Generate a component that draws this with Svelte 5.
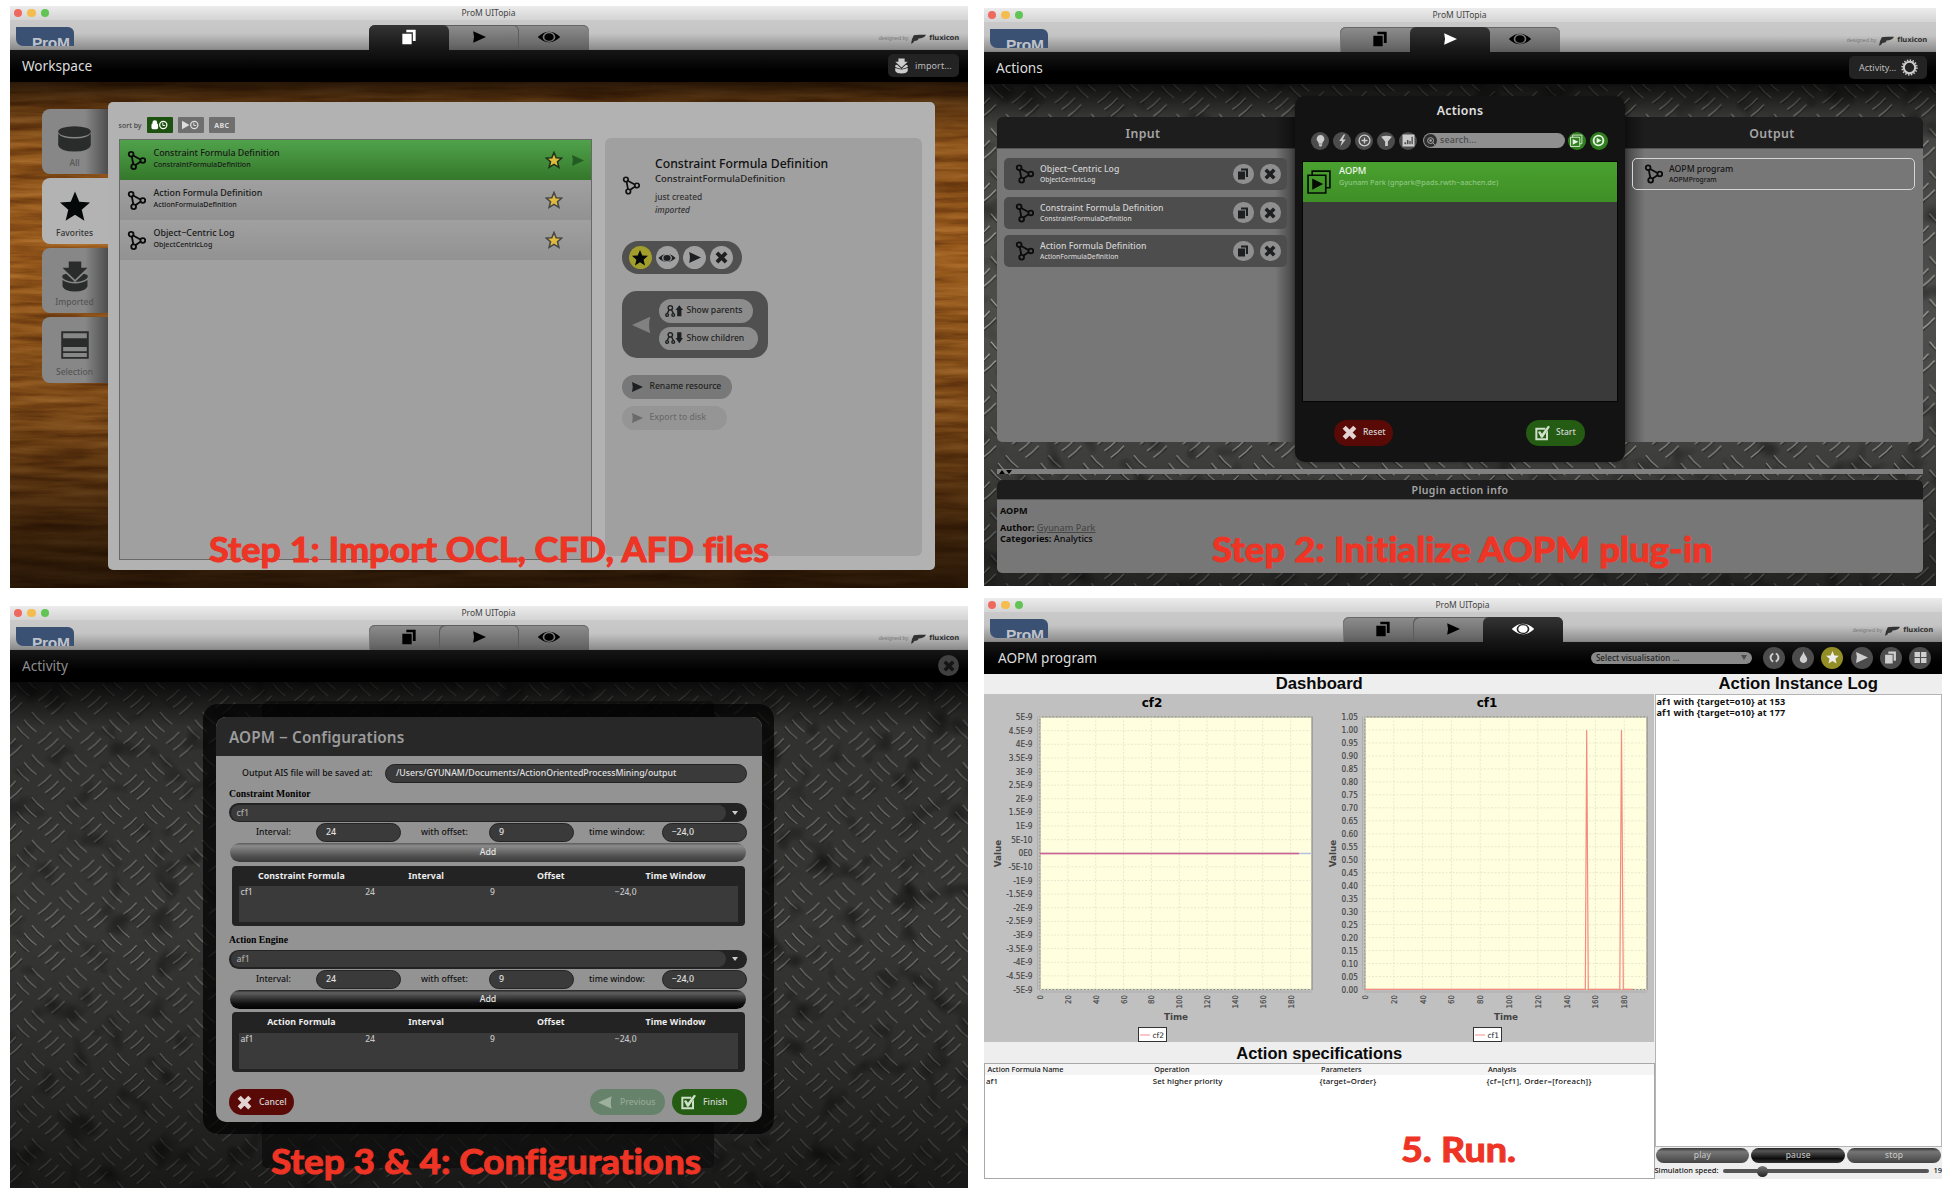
<script>
  const resources = [
    { name: 'Constraint Formula Definition', type: 'ConstraintFormulaDefinition' },
    { name: 'Action Formula Definition', type: 'ActionFormulaDefinition' },
    { name: 'Object−Centric Log', type: 'ObjectCentricLog' }
  ];
  const inputs = [resources[2], resources[0], resources[1]];
  const sideTabs = ['All', 'Favorites', 'Imported', 'Selection'];
  const sections = [
    { title: 'Constraint Monitor', key: 'cf1', column: 'Constraint Formula' },
    { title: 'Action Engine', key: 'af1', column: 'Action Formula' }
  ];
  const filters = ['bulb', 'bolt', 'plus', 'funnel', 'bars'];
  const viewTools = ['refresh', 'drop', 'star', 'play', 'copy', 'tiles'];
  const specColumns = ['Action Formula Name', 'Operation', 'Parameters', 'Analysis'];
  const specRow = ['af1', 'Set higher priority', '{target=Order}', '{cf=[cf1], Order=[foreach]}'];
  const logLines = ['af1 with {target=o10} at 153', 'af1 with {target=o10} at 177'];

  const top = 23;
  const height = 272.5;
  const expLabels = ['5E-9', '4.5E-9', '4E-9', '3.5E-9', '3E-9', '2.5E-9', '2E-9', '1.5E-9', '1E-9', '5E-10', '0E0',
    '-5E-10', '-1E-9', '-1.5E-9', '-2E-9', '-2.5E-9', '-3E-9', '-3.5E-9', '-4E-9', '-4.5E-9', '-5E-9'];
  const decLabels = Array.from({ length: 22 }, (_, i) => (1.05 - i * 0.05).toFixed(2));
  const charts = [
    { name: 'cf2', x: 56, w: 272, step: 27.85, labels: expLabels, labelX: 48.5, titleX: 168, timeX: 192, valueX: 17, legendX: 154 },
    { name: 'cf1', x: 381, w: 282, step: 28.8, labels: decLabels, labelX: 374, titleX: 503, timeX: 522, valueX: 352, legendX: 489 }
  ];
  const ticks = [0, 20, 40, 60, 80, 100, 120, 140, 160, 180];

  // Tread-plate cell: three back slashes and three forward slashes, repeated at the wrapped offsets.
  const cell = 42.67;
  const wraps = [-cell, 0, cell];
  const backs = [[12.7, 8], [20, 1.3], [27.7, -6.4]];
  const slashes = [[35, 13], [42, 19.6], [48.3, 26.3]];
</script>

{#snippet icon(name)}
  <svg class="icon" viewBox="0 0 24 24" fill="currentColor">
    {#if name === 'node'}
      <g fill="none" stroke="currentColor" stroke-width="2.3">
        <path d="M6 6.5 8 17M8.3 6 17 10.8M17 13.6 10.5 18" />
        <circle cx="5.2" cy="4" r="3" /><circle cx="20" cy="12" r="3" /><circle cx="8.4" cy="20" r="3" />
      </g>
    {:else if name === 'eye'}
      <path fill-rule="evenodd" d="M0 12Q12-2 24 12Q12 26 0 12ZM12 5.2a6.8 6.8 0 1 0 0 13.6a6.8 6.8 0 1 0 0-13.6Z" />
      <circle cx="12" cy="12" r="5" />
    {:else if name === 'copy'}
      <path d="M2 7h14v16H2zM8 1h14v17h-4.2V5H8z" />
    {:else if name === 'play'}
      <path d="M2 2Q5 12 2 22L24 12Z" />
    {:else if name === 'back'}
      <path d="M22 2Q19 12 22 22L0 12Z" />
    {:else if name === 'x'}
      <path d="M6 1l6 6 6-6 5 5-6 6 6 6-5 5-6-6-6 6-5-5 6-6-6-6z" />
    {:else if name === 'star'}
      <path d="M12 0l3.4 8.2 8.6.6-6.6 5.7 2.1 8.8-7.5-4.8-7.5 4.8 2.1-8.8L0 8.800l8.600-.6z" />
    {:else if name === 'fav'}
      <path d="M12 2l2.900 7 7.500.5-5.800 4.900 1.900 7.400-6.500-4.100-6.500 4.100 1.900-7.400L1.600 9.500l7.500-.5z" fill="#e0bb3c" stroke="currentColor" stroke-width="2" />
    {:else if name === 'disk'}
      <ellipse cx="12" cy="6.800" rx="11.500" ry="3.800" />
      <path d="M.5 8.300Q3 11.600 12 11.600T23.500 8.300V16.500Q22 20.800 12 20.800T.5 16.500Z" />
    {:else if name === 'import'}
      <path d="M7 0h10v5h5l-10 9.500L2 5h5z" />
      <path d="M2.500 10.500L5 9.800l7 6.500 7-6.500 2.500.9Q23 12 21.500 13.500Q18 16.200 12 16.200T2.500 13.500Q1 12 2.500 10.500Z" />
      <path d="M2 14.800Q6 17.500 12 17.500T22 14.800V20Q20 24 12 24T2 20Z" />
    {:else if name === 'rows'}
      <path fill-rule="evenodd" d="M1 1h22v22H1zM2.500 2.500v4h19v-4zM2.500 13.500v3.500h19v-3.500zM2.500 18.300v3.200h19v-3.200z" />
    {:else if name === 'check'}
      <path d="M2 4h15v3H5v13h13v-8l3-4v15H2z" />
      <path d="M6 10.500l3-1.500 3 4L21 1l3 1.500L13 19h-2.500z" />
    {:else if name === 'gear'}
      <circle cx="12" cy="12" r="8" fill="none" stroke="currentColor" stroke-width="2.900" />
      <circle cx="12" cy="12" r="10.300" fill="none" stroke="currentColor" stroke-width="2.600" stroke-dasharray="2 2.045" />
    {:else if name === 'bulb'}
      <path d="M12 2a7 7 0 0 1 5 12Q15.500 16 15.500 18h-7Q8.500 16 7 14A7 7 0 0 1 12 2ZM9 19h6v2l-2 2h-2l-2-2z" />
    {:else if name === 'bolt'}
      <path d="M14 1L6 13h5L8 23 18 10h-5.500L17 1z" />
    {:else if name === 'plus'}
      <g fill="none" stroke="currentColor" stroke-width="2.400"><circle cx="12" cy="12" r="10" /><path d="M12 6.500v11M6.500 12h11" /></g>
    {:else if name === 'funnel'}
      <path d="M2 5q10-4 20 0l-7.500 9v8h-5v-8z" />
    {:else if name === 'bars'}
      <path fill-rule="evenodd" d="M1 1h22v22H1zM4.500 15v4h3v-4zM9 11v8h3v-8zM13.500 13v6h2.500v-6zM17.500 5v14h2.500V5z" />
    {:else if name === 'search'}
      <g fill="none" stroke="currentColor" stroke-width="2.400"><circle cx="11" cy="11" r="7" /><path d="M16 16l5 5" /></g><circle cx="11" cy="11" r="3" />
    {:else if name === 'refresh'}
      <path d="M9 3Q2 7 3 13q.5 5 5 8l2.500-2.500Q6 16 6.500 12T10.500 6zM15 21q7-4 6-10q-.5-5-5-8l-2.500 2.500Q18 8 17.500 12T13.500 18z" />
    {:else if name === 'drop'}
      <path d="M12 1q1.500 5 5 9.500 4 6-.5 10-4.500 3.500-9 0-4.500-4-.5-10Q11 6 12 1z" />
    {:else if name === 'tiles'}
      <path d="M1 2h10v9H1zM13 2h10v9H13zM1 13h10v9H1zM13 13h10v9H13z" />
    {:else if name === 'plugin'}
      <path fill="none" stroke="currentColor" stroke-width="1.600" d="M1 6h17v17H1zM5 6V2h17v16h-4" /><path d="M5 9l10.500 5.500L5 20z" />
    {:else if name === 'target'}
      <circle cx="12" cy="12" r="9" fill="none" stroke="currentColor" stroke-width="3.500" /><path d="M8.500 7l9 5-9 5z" />
    {/if}
  </svg>
{/snippet}

{#snippet family(down)}
  <svg class="family" viewBox="0 0 34 24">
    <g fill="none" stroke="#1d1f20" stroke-width="2.600">
      <circle cx="10" cy="6" r="4.200" /><path d="M7.500 10L4 17M12.500 10L16 17" /><circle cx="4" cy="19.500" r="2.600" /><circle cx="15.500" cy="19.500" r="2.600" />
    </g>
    {#if down}<path fill="#1d1f20" d="M23 1h8v11h3l-7 10-7-10h3z" />{:else}<path fill="#1d1f20" d="M27 1l7 9h-3v12h-8V10h-3z" />{/if}
  </svg>
{/snippet}

{#snippet plate(id, tone)}
  <svg class="backdrop {tone}">
    <defs>
      <pattern {id} width={cell} height={cell} patternUnits="userSpaceOnUse">
        {#each wraps as dx}
          {#each wraps as dy}
            {#each backs as [x, y]}
              <path class="shade" d="M{x + dx - 6.5} {y + dy - 4.5}q5 6 11.500 10.500" />
              <path class="ridge" d="M{x + dx - 5.5} {y + dy - 6}q4.500 6.500 11.500 11.500" />
            {/each}
            {#each slashes as [x, y]}
              <path class="shade" d="M{x + dx - 5.5} {y + dy + 7}l12-11" />
              <path class="ridge" d="M{x + dx - 6.5} {y + dy + 5.5}q7-4.500 12.500-11" />
            {/each}
          {/each}
        {/each}
      </pattern>
      <filter id="{id}-grime" x="0" y="0" width="100%" height="100%">
        <feTurbulence type="fractalNoise" baseFrequency="0.035" numOctaves="2" seed="8" />
        <feColorMatrix values="0 0 0 0 0  0 0 0 0 0  0 0 0 0 0  1.400 0 0 0 -0.780" />
      </filter>
    </defs>
    <rect class="base" width="100%" height="100%" />
    <rect width="100%" height="100%" fill="url(#{id})" />
    <rect width="100%" height="100%" filter="url(#{id}-grime)" />
  </svg>
  <div class="backdrop fade"></div>
{/snippet}

{#snippet chrome(active)}
  <div class="titlebar">
    <div class="lights"><i class="red"></i><i class="amber"></i><i class="green"></i></div>
    <span>ProM UITopia</span>
  </div>
  <div class="toolbar">
    <div class="logo"><b>ProM</b></div>
    <div class="tabs">
      {#each ['copy', 'play', 'eye'] as name, i}
        <div class="tab {name}" class:active={active === i}>{@render icon(name)}</div>
      {/each}
    </div>
    <div class="brand">
      <small>designed by</small>
      <svg viewBox="0 0 16 10"><path fill="#333" d="M3 1Q5 0 16 .5 14 4.500 8 4.500 8 7 3.500 7 3 9 0 10 1 4 3 1Z" /></svg>
      <b>fluxicon</b>
    </div>
  </div>
{/snippet}

{#snippet caption(text, x, y, width)}
  <svg class="caption"><text {x} {y} textLength={width} lengthAdjust="spacingAndGlyphs">{text}</text></svg>
{/snippet}

<main>
  <div class="column left">
    <section class="window tall">
      {@render chrome(0)}
      <header class="head">
        <h1>Workspace</h1>
        <button class="headbtn import">{@render icon('import')}import...</button>
      </header>
      <div class="body workspace">
        <svg class="backdrop">
          <filter id="wood" x="0" y="0" width="100%" height="100%" color-interpolation-filters="sRGB">
            <feTurbulence type="fractalNoise" baseFrequency="0.011 0.120" numOctaves="5" seed="11" />
            <feColorMatrix values="1 0 0 0 0  1 0 0 0 0  1 0 0 0 0  0 0 0 0 1" />
            <feComponentTransfer>
              <feFuncR type="table" tableValues="0.330 0.460 0.590 0.680 0.750" />
              <feFuncG type="table" tableValues="0.170 0.250 0.350 0.430 0.500" />
              <feFuncB type="table" tableValues="0.040 0.070 0.110 0.170 0.240" />
            </feComponentTransfer>
          </filter>
          <rect width="100%" height="100%" filter="url(#wood)" />
        </svg>
        <div class="backdrop woodfade"></div>
        <nav class="sidetabs">
          {#each sideTabs as label, i}
            <div class="sidetab" class:current={i === 1}>
              {@render icon(['disk', 'star', 'import', 'rows'][i])}
              <span>{label}</span>
            </div>
          {/each}
        </nav>
        <div class="sheet">
          <div class="listpane">
            <div class="sort">
              <span>sort by</span>
              <div class="chip on">
                <svg viewBox="0 0 18 10" fill="#fff"><circle cx="4" cy="2.500" r="2.500" /><rect x=".5" y="3.500" width="7" height="6" rx="1.500" /><circle cx="13" cy="5" r="3.800" fill="none" stroke="#fff" stroke-width="1.300" /><path d="M12.500 2.500v3h2.500" fill="none" stroke="#fff" /></svg>
              </div>
              <div class="chip">
                <svg viewBox="0 0 18 10" fill="#ddd"><path d="M0 .5 8 5 0 9.500z" /><circle cx="13" cy="5" r="3.800" fill="none" stroke="#ddd" stroke-width="1.300" /><path d="M12.500 2.500v3h2.500" fill="none" stroke="#ddd" /></svg>
              </div>
              <div class="chip">ABC</div>
            </div>
            <div class="reslist">
              {#each resources as r, i}
                <div class="resrow" class:selected={i === 0}>
                  {@render icon('node')}
                  <div class="names"><p>{r.name}</p><small>{r.type}</small></div>
                  <div class="favs">{@render icon('fav')}</div>
                  <div class="go">{#if i === 0}{@render icon('play')}{/if}</div>
                </div>
              {/each}
            </div>
          </div>
          <div class="detail">
            <div class="about">
              {@render icon('node')}
              <div>
                <h2>{resources[0].name}</h2>
                <h3>{resources[0].type}</h3>
                <p>just created</p>
                <p><em>imported</em></p>
              </div>
            </div>
            <div class="pillbar">
              {#each ['star', 'eye', 'play', 'x'] as name}
                <div class="round {name}">{@render icon(name)}</div>
              {/each}
            </div>
            <div class="kin">
              {@render icon('back')}
              <div>
                <button class="soft">{@render family(false)}Show parents</button>
                <button class="soft wide">{@render family(true)}Show children</button>
              </div>
            </div>
            <button class="act">{@render icon('play')}Rename resource</button>
            <button class="act off">{@render icon('play')}Export to disk</button>
          </div>
        </div>
      </div>
      {@render caption('Step 1: Import OCL, CFD, AFD files', 199, 556, 560)}
    </section>

    <section class="window tall">
      {@render chrome(-1)}
      <header class="head dim">
        <h1>Activity</h1>
        <div class="closer">{@render icon('x')}</div>
      </header>
      <div class="body activity">
        {@render plate('plate-dark', 'dark')}
        <div class="ghost"></div>
        <div class="frame">
          <div class="dialog">
            <h2>AOPM − Configurations</h2>
            <div class="form">
              <div class="path"><span>Output AIS file will be saved at:</span><div class="field">/Users/GYUNAM/Documents/ActionOrientedProcessMining/output</div></div>
              {#each sections as s, i}
                <h4>{s.title}</h4>
                <div class="select"><div>{s.key}</div><i></i></div>
                <div class="params">
                  <span class="p1">Interval:</span><div class="field">24</div>
                  <span class="p2">with offset:</span><div class="field">9</div>
                  <span class="p3">time window:</span><div class="field">−24,0</div>
                </div>
                <button class="add" class:black={i === 1}>Add</button>
                <div class="grid">
                  <div class="gridhead">
                    {#each [s.column, 'Interval', 'Offset', 'Time Window'] as c}<b>{c}</b>{/each}
                  </div>
                  <div class="gridbody">
                    {#each [s.key, '24', '9', '−24,0'] as c}<span>{c}</span>{/each}
                  </div>
                </div>
              {/each}
              <div class="dialogfoot">
                <button class="pill redpill">{@render icon('x')}Cancel</button>
                <button class="pill pale">{@render icon('back')}Previous</button>
                <button class="pill greenpill">{@render icon('check')}Finish</button>
              </div>
            </div>
          </div>
        </div>
      </div>
      {@render caption('Step 3 & 4: Configurations', 261, 568, 430)}
    </section>
  </div>

  <div class="column right">
    <section class="window second">
      {@render chrome(1)}
      <header class="head">
        <h1>Actions</h1>
        <button class="headbtn activitybtn">Activity...{@render icon('gear')}</button>
      </header>
      <div class="body actions">
        {@render plate('plate-mid', 'mid')}
        <div class="panels">
          <div class="panel input">
            <h2>Input</h2>
            <div class="cards">
              {#each inputs as r}
                <div class="card">
                  {@render icon('node')}
                  <div class="names"><p>{r.name}</p><small>{r.type}</small></div>
                  <div class="round copy">{@render icon('copy')}</div>
                  <div class="round">{@render icon('x')}</div>
                </div>
              {/each}
            </div>
          </div>
          <div class="center">
            <h2>Actions</h2>
            <div class="filters">
              {#each filters as f}<div class="round">{@render icon(f)}</div>{/each}
              <div class="search"><div>{@render icon('search')}</div>search...</div>
              <div class="round lit">{@render icon('plugin')}</div>
              <div class="round lit">{@render icon('target')}</div>
            </div>
            <div class="plugins">
              <div class="plugin">
                {@render icon('plugin')}
                <div><p>AOPM</p><small>Gyunam Park (gnpark@pads.rwth−aachen.de)</small></div>
              </div>
            </div>
            <div class="centerfoot">
              <button class="pill redpill">{@render icon('x')}Reset</button>
              <button class="pill greenpill">{@render icon('check')}Start</button>
            </div>
          </div>
          <div class="panel output">
            <h2>Output</h2>
            <div class="cards">
              <div class="card outlined">
                {@render icon('node')}
                <div class="names"><p>AOPM program</p><small>AOPMProgram</small></div>
              </div>
            </div>
          </div>
        </div>
        <div class="splitter"><i class="up"></i><i class="down"></i></div>
        <div class="panel info">
          <h2>Plugin action info</h2>
          <div class="infotext">
            <p class="first"><b>AOPM</b></p>
            <p><b>Author:</b> <u>Gyunam Park</u></p>
            <p><b>Categories:</b> Analytics</p>
          </div>
        </div>
      </div>
      {@render caption('Step 2: Initialize AOPM plug-in', 228, 554, 501)}
    </section>

    <section class="window fourth">
      {@render chrome(2)}
      <header class="head">
        <h1>AOPM program</h1>
        <div class="viewtools">
          <div class="viewselect"><span>Select visualisation ...</span><i></i></div>
          {#each viewTools as t}<div class="round {t}">{@render icon(t)}</div>{/each}
        </div>
      </header>
      <div class="body run">
        <div class="runleft">
          <h2>Dashboard</h2>
          <svg class="charts" viewBox="0 0 670 348">
            {#each charts as c}
              <text class="ctitle" x={c.titleX} y="13">{c.name}</text>
              <rect x={c.x} y={top} width={c.w} height={height} fill="#ffffdf" stroke="#8c8c84" stroke-width="1.200" />
              <path class="axis" d="M{c.x - 2.500} {top}v{height}M{c.x} {top + height + 2.500}h{c.w}" />
              {#each c.labels as l, i}
                {@const y = top + (i * height) / (c.labels.length - 1)}
                <path class="gridline" d="M{c.x} {y}h{c.w}" />
                <text class="ylabel" x={c.labelX} y={y + 3}>{l}</text>
              {/each}
              {#each ticks as t, i}
                {@const x = c.x + i * c.step}
                <path class="gridline" d="M{x} {top}v{height}" />
                <text class="xlabel" transform="translate({x + 3} {top + height + 5.500}) rotate(-90)">{t}</text>
              {/each}
              <text class="clabel" x={c.timeX} y="325.500">Time</text>
              <text class="clabel" transform="translate({c.valueX} 159.500) rotate(-90)">Value</text>
              <rect x={c.legendX + 0.500} y="333.500" width="28" height="14" fill="#fff" stroke="#333" />
              <path d="M{c.legendX + 2} 341h10" stroke="#f58d8d" />
              <text class="legend" x={c.legendX + 14.500} y="343.500">{c.name}</text>
            {/each}
            <path d="M56 159.500h272" stroke="#b9bfe0" stroke-width="1.300" />
            <path d="M56 159.500h259" stroke="#d0608c" stroke-width="1.300" />
            <path d="M381 295.300h220.300L602.700 36 604.300 295.300h31.500L637.500 36 639.300 295.300h9.700" fill="none" stroke="#f58a80" stroke-width="1.200" />
          </svg>
          <h2 class="lower">Action specifications</h2>
          <div class="specs">
            <div class="spechead">{#each specColumns as c}<span>{c}</span>{/each}</div>
            <div class="specrow">{#each specRow as c}<span>{c}</span>{/each}</div>
          </div>
        </div>
        <div class="runright">
          <h2>Action Instance Log</h2>
          <div class="log">{#each logLines as l}<p>{l}</p>{/each}</div>
          <div class="media"><button>play</button><button class="black">pause</button><button>stop</button></div>
          <div class="speed"><span>Simulation speed:</span><div class="track"><i></i></div><span>19</span></div>
        </div>
      </div>
      {@render caption('5. Run.', 417, 564, 115)}
    </section>
  </div>
</main>

<style>
  :global(body) { background: #fff; }
  main { display: flex; width: 1948px; height: 1196px; overflow: hidden; font-family: 'Noto Sans', 'Open Sans', sans-serif; font-weight: 500; line-height: 1; color: #111; }
  main :global(*) { box-sizing: border-box; }
  h1, h2, h3, h4, p { margin: 0; font-weight: inherit; }
  button { border: 0; font: inherit; color: inherit; padding: 0; display: flex; align-items: center; }
  .icon { display: block; flex: none; width: 18px; height: 18px; }
  .column { display: flex; flex-direction: column; }
  .left { padding: 6px 0 0 10px; gap: 18px; }
  .right { padding: 8px 0 0 16px; gap: 12.500px; }
  .window { position: relative; display: flex; flex-direction: column; overflow: hidden; }
  .tall { width: 958px; height: 582px; }
  .second { width: 952px; height: 577.500px; }
  .fourth { width: 958px; height: 581px; }

  .titlebar { position: relative; display: flex; align-items: center; justify-content: center; height: 14px; flex: none; background: linear-gradient(#ececec, #d4d4d4); font-size: 8.500px; font-weight: 400; color: #444; padding-right: 1px; }
  .lights { position: absolute; left: 3.500px; top: 2.500px; display: flex; gap: 5px; }
  .lights i { width: 8.500px; height: 8.500px; border-radius: 50%; }
  .red { background: #ee6a5f; } .amber { background: #f5bd4f; } .green { background: #61c454; }
  .toolbar { display: grid; grid-template-columns: calc(50% - 120px) 220px 1fr; height: 30px; flex: none; background: linear-gradient(#cacaca, #c4c4c4 45%, #8b8b8b 98%, #666); }
  .logo { margin: 7px 0 0 6px; width: 58px; height: 19px; overflow: hidden; background: #3b5174; border-radius: 0 6px 0 7px; padding: 7.500px 0 0 16px; font-family: 'Liberation Sans', sans-serif; font-size: 15.500px; color: #bfc3c9; line-height: 16px; }
  .logo b { font-weight: 700; letter-spacing: -.3px; }
  .tabs { display: flex; margin-top: 4.500px; border-radius: 6px 6px 0 0; background: linear-gradient(#8e8e8e, #6b6b6b 75%, #5c5c5c); box-shadow: inset 0 1px #666, inset 1px 0 #777; }
  .tab { width: 80px; margin-right: -10px; display: flex; align-items: center; justify-content: center; color: #000; border-radius: 6px 6px 0 0; }
  .tab:last-child { margin-right: 0; }
  .tab:nth-child(2):not(.active) { box-shadow: inset 1px 1px #5d5d5d, inset -1px 0 #5d5d5d; }
  .tab.active { color: #fff; background: linear-gradient(#343434, #151515); position: relative; z-index: 1; }
  .tab .icon { width: 16px; height: 16px; }
  .tab.eye .icon { width: 18px; height: 18px; transform: scaleX(1.250); }
  .tab.play .icon { width: 14px; height: 14px; }
  .brand { display: flex; align-items: center; justify-content: flex-end; padding: 7px 9px 0 0; gap: 3px; font-size: 8px; color: #333; }
  .brand small { font-family: 'Liberation Sans', sans-serif; font-size: 5.500px; color: #777; }
  .brand svg { width: 15px; height: 10px; }
  .brand b { font-family: 'DejaVu Sans', sans-serif; font-size: 7px; letter-spacing: -.2px; }
  .head { display: flex; align-items: center; justify-content: space-between; height: 31.500px; flex: none; background: linear-gradient(#161616, #000 65%); color: #ddd; padding: 0 9px 0 12px; }
  .head h1 { font-size: 13.600px; font-weight: 400; margin-top: 1px; }
  .head.dim { color: #8d8d8d; }
  .headbtn { height: 23px; border-radius: 5px; background: #232323; color: #bdbdbd; font-size: 9px; font-weight: 400; }
  .import { width: 71px; gap: 6px; padding-left: 6px; letter-spacing: .1px; }
  .import .icon { width: 15px; height: 16px; color: #ccc; }
  .activitybtn { width: 78px; padding-left: 10px; gap: 5px; }
  .activitybtn .icon { width: 17px; height: 17px; color: #ccc; }
  .closer { width: 21px; height: 21px; border-radius: 50%; background: #404040; color: #141414; display: grid; place-items: center; }
  .closer .icon { width: 12px; height: 12px; }

  .body { position: relative; flex: 1; min-height: 0; }
  .backdrop { position: absolute; inset: 0; width: 100%; height: 100%; }
  .mid .base { fill: #4d4d4b; } .dark .base { fill: #363635; }
  .ridge { fill: none; stroke: #b2b2ac; stroke-width: 1.100; stroke-linecap: round; }
  .shade { fill: none; stroke: #1c1c1c; stroke-width: 1.800; opacity: .45; }
  .dark .ridge { stroke: #7a7a77; }
  .fade { background: linear-gradient(rgba(0,0,0,.8), rgba(0,0,0,.1) 9%, rgba(0,0,0,0) 50%, rgba(0,0,0,.2) 75%, rgba(0,0,0,.55)); }
  .woodfade { background: linear-gradient(rgba(10,4,0,.8), rgba(10,4,0,.4) 5%, rgba(10,4,0,.1) 12%, rgba(10,4,0,0) 35%, rgba(10,4,0,.2) 65%, rgba(10,4,0,.7) 92%, rgba(10,4,0,.78)); }

  .workspace { display: flex; padding: 20.500px 33px 18px 32px; }
  .sidetabs { position: relative; width: 66px; padding-top: 6.500px; display: flex; flex-direction: column; gap: 4px; }
  .sidetab { height: 65.500px; border-radius: 8px 0 0 8px; background: linear-gradient(90deg, #878787 65%, #4d4d4d); display: flex; flex-direction: column; align-items: center; justify-content: space-between; padding: 13px 1px 6.500px 0; font-size: 8.500px; color: #555; }
  .sidetab .icon { width: 30px; height: 31px; color: #2a2c2c; }
  .sidetab:first-child .icon { width: 35px; height: 34px; }
  .sidetab:last-child .icon { width: 30px; height: 30px; }
  .sidetab.current { background: #b3b3b3; color: #333; }
  .sidetab.current .icon { color: #050808; }
  .sheet { position: relative; flex: 1; display: flex; gap: 13px; background: #b2b2b2; border-radius: 5px; padding: 15px 13px 10px 10.500px; }
  .listpane { width: 473px; display: flex; flex-direction: column; }
  .sort { display: flex; align-items: center; height: 16px; gap: 4.500px; font-size: 7px; color: #444; white-space: nowrap; }
  .sort span { width: 23.500px; }
  .chip { width: 26.500px; height: 15.500px; border-radius: 1px; background: #6f6f6f; color: #ddd; font-size: 7px; font-weight: 700; letter-spacing: .4px; display: grid; place-items: center; }
  .chip.on { background: #1c5110; }
  .chip svg { width: 17px; height: 10px; }
  .reslist { flex: 1; margin-top: 6px; border: 1px solid #686868; background: #a0a0a0; }
  .resrow { display: flex; height: 40px; padding: 0 7px 0 7px; align-items: center; background: linear-gradient(#a0a0a0, #929292); }
  .resrow.selected { background: linear-gradient(#50a24b, #34782a); }
  .resrow > .icon { width: 19px; height: 21px; color: #0a0a0a; }
  .resrow .names { flex: 1; margin: -3px 0 0 8px; }
  .resrow .names p { font-size: 8.900px; line-height: 12px; color: #181818; }
  .resrow .names small { display: block; font-size: 7.100px; line-height: 11px; color: #181818; }
  .favs { width: 25.500px; color: #444; } .selected .favs { color: #1b331a; }
  .go { width: 13px; color: #235c22; } .go .icon { width: 13px; height: 13px; }
  .detail { flex: 1; margin: 21px 0 4px; background: #a0a0a0; border-radius: 6px; padding: 16px 17px; }
  .about { display: flex; align-items: center; height: 62px; gap: 15.500px; padding-top: 1.500px; }
  .about .icon { width: 18px; height: 21px; }
  .about h2 { font-size: 12.200px; line-height: 17px; color: #111; }
  .about h3 { font-size: 9.500px; line-height: 14px; color: #222; margin-bottom: 4px; }
  .about p { font-size: 8.400px; line-height: 13.500px; color: #333; }
  .round { width: 20.500px; height: 20.500px; flex: none; border-radius: 50%; background: #a0a0a0; color: #1d1f20; display: grid; place-items: center; }
  .round .icon { width: 11px; height: 11px; }
  .pillbar { display: flex; align-items: center; width: 120px; height: 33px; margin-top: 25px; border-radius: 16.500px; background: #505050; padding-left: 7px; gap: 4.300px; }
  .pillbar .round { width: 23px; height: 23px; }
  .pillbar .icon { width: 13px; height: 13px; }
  .pillbar .star { background: #a19e2b; color: #050808; }
  .pillbar .star .icon { width: 16px; height: 16px; }
  .pillbar .eye .icon { width: 14px; height: 14px; transform: scaleX(1.250); }
  .kin { display: flex; align-items: center; width: 146.500px; height: 67px; margin-top: 17px; border-radius: 15px; background: #505050; padding-left: 10.500px; gap: 6.500px; }
  .kin > .icon { width: 20px; height: 22px; color: #818181; }
  .soft { width: 94.500px; height: 23.500px; border-radius: 12px; background: #8c8c8c; font-size: 8.600px; color: #222; gap: 4px; padding-left: 6px; }
  .soft + .soft { margin-top: 4px; }
  .soft.wide { width: 99.500px; }
  .family { width: 18px; height: 14px; flex: none; }
  .act { width: 110px; height: 23.500px; margin-top: 17px; border-radius: 12px; background: #787878; font-size: 8.600px; color: #1d1f20; gap: 7px; padding-left: 9px; }
  .act .icon { width: 12px; height: 12px; }
  .act.off { width: 105px; margin-top: 7.500px; background: #959595; color: #6b6b6b; }

  .activity { padding-top: 22px; }
  .ghost { position: absolute; left: 252px; top: 19.500px; width: 452px; height: 467px; border-radius: 5px; background: rgba(12,12,12,.72); }
  .frame { position: relative; margin-left: 193px; width: 571px; height: 430px; padding: 13px; border-radius: 15px; background: rgba(0,0,0,.7); }
  .dialog { width: 546px; height: 405.500px; border-radius: 10px; background: #939393; overflow: hidden; }
  .dialog h2 { height: 39.500px; background: #282828; color: #9c9c9c; font-size: 15.300px; font-weight: 600; line-height: 40px; padding-left: 13px; letter-spacing: .1px; }
  .form { padding: 7.500px 15px 0 13px; font-size: 8.700px; }
  .path { display: flex; align-items: center; justify-content: space-between; white-space: nowrap; }
  .path span { margin-left: 13px; font-size: 8.800px; }
  .path .field { width: 362px; padding-left: 10px; font-size: 8.750px; }
  .field { height: 19px; border-radius: 10px; background: #3a3a3a; border: 1.500px solid #232323; color: #e0e0e0; padding-left: 9px; line-height: 17px; font-size: 8.800px; }
  .form h4 { font: 700 9.700px/21px 'Liberation Serif', serif; height: 20.500px; color: #000; }
  .select { display: flex; align-items: center; justify-content: space-between; height: 19px; border-radius: 10px; background: #232323; padding: 1.500px 9px 1.500px 1.500px; }
  .select div { width: 495px; height: 16px; border-radius: 8px; background: #3a3a3a; color: #aaa; line-height: 16px; padding-left: 6px; font-size: 8.800px; }
  .select i { border: 3px solid transparent; border-top: 4px solid #ccc; border-bottom: 0; }
  .params { display: flex; align-items: center; height: 21px; }
  .params .field { width: 85px; }
  .p1 { width: 87px; padding-left: 27px; } .p2 { width: 88px; padding-left: 20px; } .p3 { width: 87.500px; padding-left: 15px; }
  .add { justify-content: center; width: 516px; height: 19px; margin-left: 1px; border-radius: 10px; color: #e3e3e3; font-size: 8.800px; background: linear-gradient(#5a5a5a, #8b8b8b 15%, #505050 70%, #3a3a3a); }
  .add.black { background: linear-gradient(#222, #5f5f5f 15%, #111 70%, #000); }
  .grid { margin: 3.500px 2px 3.500px 3px; height: 60px; border-radius: 4px; background: #232323; padding: 0 7px 3px; }
  .gridhead, .gridbody { display: grid; grid-template-columns: repeat(4, 1fr); }
  .gridhead { height: 20.500px; line-height: 20px; text-align: center; color: #eee; font-size: 8.800px; letter-spacing: .1px; }
  .gridbody { height: 36px; background: #3a3a3a; color: #c6c6c6; line-height: 11px; font-size: 8.500px; }
  .gridbody span { padding-left: 1.500px; }
  .dialogfoot { display: flex; gap: 7px; margin-top: 17px; }
  .pill { height: 26px; border-radius: 13px; font-size: 8.700px; gap: 7px; padding-left: 8px; color: #d5d5d5; }
  .pill .icon { width: 15px; height: 15px; color: #e3d4d3; }
  .redpill { background: #590a06; } .greenpill { background: #255c14; }
  .greenpill .icon { width: 16px; height: 16px; color: #cfe0cb; }
  .dialogfoot .redpill { width: 64.500px; margin-right: auto; }
  .dialogfoot .pale { width: 75px; background: #67826a; color: #95a896; }
  .dialogfoot .pale .icon { color: #9db09e; }
  .dialogfoot .greenpill { width: 75px; }

  .actions { padding: 12.500px 13px 12px; }
  .panels { position: relative; display: flex; height: 366px; align-items: flex-start; }
  .panel { position: relative; background: #777; border-radius: 5px; overflow: hidden; }
  .panel h2 { background: #1d1d1d; color: #a5a5a5; text-align: center; font-size: 12.300px; font-weight: 600; letter-spacing: .4px; border-bottom: 1px solid #555; }
  .input, .output { margin-top: 21px; height: 325px; width: 298px; }
  .input { border-radius: 5px 0 0 5px; } .output { border-radius: 0 5px 5px 0; }
  .input::after, .output::after { content: ''; position: absolute; top: 0; bottom: 0; width: 20px; }
  .input::after { right: 0; background: linear-gradient(90deg, transparent, rgba(0,0,0,.45)); }
  .output::after { left: 0; background: linear-gradient(270deg, transparent, rgba(0,0,0,.45)); }
  .input h2, .output h2 { height: 32px; line-height: 34px; }
  .input h2 { padding-right: 6px; } .output h2 { padding-right: 4px; }
  .cards { padding: 9px 8px 0 7px; display: flex; flex-direction: column; gap: 6.500px; }
  .card { width: 283px; height: 32px; border-radius: 5px; background: #4d4d4d; display: flex; align-items: center; padding: 0 6.500px 0 10.500px; gap: 6.500px; position: relative; z-index: 1; color: #0b0b0b; }
  .card .icon { flex: none; }
  .card > .icon { width: 19px; height: 20px; }
  .card .names { flex: 1; color: #d2d2d2; }
  .card .names p { font-size: 8.700px; line-height: 11px; white-space: nowrap; }
  .card .names small { display: block; font-size: 6.700px; line-height: 9px; }
  .card .round { background: #8f8f8f; }
  .card .round .icon { width: 12px; height: 12px; }
  .outlined { background: transparent; border: 1px solid #d5d5d5; }
  .outlined .names { color: #151515; }
  .center { position: relative; z-index: 2; width: 330px; height: 366px; background: #131313; border-radius: 10px; padding: 0 7px; box-shadow: 0 0 5px rgba(0,0,0,.4); }
  .center h2 { color: #e0e0e0; font-size: 12.300px; font-weight: 600; text-align: center; line-height: 30px; height: 35px; letter-spacing: .3px; }
  .filters { display: flex; align-items: center; gap: 4px; padding-left: 9px; height: 19px; }
  .filters .round { width: 18px; height: 18px; background: #4c4c4c; color: #ccc; }
  .filters .round .icon { width: 13px; height: 13px; }
  .filters .lit { background: #2f7f1e; color: #e8f2e6; }
  .search { display: flex; align-items: center; width: 141.500px; height: 15.500px; border-radius: 8px; background: #8f8f8f; color: #4a4a4a; font-size: 8.800px; margin: 0 -1px 0 2px; letter-spacing: .2px; gap: 3px; }
  .search div { width: 13px; height: 13px; margin-left: 1px; border-radius: 50%; background: #2f2f2f; color: #aaa; display: grid; place-items: center; }
  .search .icon { width: 10px; height: 10px; }
  .plugins { height: 241px; margin-top: 11px; background: #3a3a3a; border: 1px solid #050505; }
  .plugin { height: 40px; background: linear-gradient(#4aa12f, #3f8f27); display: flex; padding: 3px 0 0 4px; gap: 7px; }
  .plugin .icon { width: 25px; height: 25px; margin-top: 4px; color: #050d03; }
  .plugin p { color: #f0f5ee; font-size: 9.300px; line-height: 12px; }
  .plugin small { color: #8ec781; font-size: 7.250px; line-height: 11px; display: block; }
  .centerfoot { display: flex; justify-content: space-between; padding: 17.500px 33px 0 32px; }
  .centerfoot .pill { width: 59px; font-size: 8.500px; gap: 6px; }
  .splitter { position: relative; margin-top: 6.500px; height: 5.500px; background: #808080; display: flex; gap: 1px; padding: 1px 2px; }
  .splitter i { width: 0; height: 0; border: 3.500px solid transparent; }
  .splitter .up { border-bottom: 4px solid #000; border-top: 0; }
  .splitter .down { border-top: 4px solid #000; border-bottom: 0; }
  .info { margin-top: 6px; height: 92.500px; }
  .info h2 { height: 20px; line-height: 21px; font-size: 10.500px; }
  .infotext { padding: 5.500px 3px; font-size: 9.100px; line-height: 10.500px; color: #0a0a0a; }
  .infotext .first { margin-bottom: 7px; }
  .infotext u { color: #474747; }

  .fourth .head { padding: 0 11px 0 14px; }
  .viewtools { display: flex; align-items: center; gap: 7.200px; }
  .viewselect { display: flex; justify-content: space-between; align-items: center; width: 161px; height: 12.500px; border-radius: 7px; background: #898989; color: #222; font-size: 8px; padding: 0 5px; letter-spacing: .1px; margin-right: 4px; }
  .viewselect i { border: 3px solid transparent; border-top: 5px solid #4b4b4b; border-bottom: 0; }
  .viewtools .round { width: 22px; height: 22px; background: #4c4c4c; color: #cfcfcf; }
  .viewtools .round .icon { width: 13px; height: 13px; }
  .viewtools .star { background: #938f26; color: #eee; }
  .run { display: flex; background: #eee; }
  .run h2 { font: 700 16.700px/20.500px 'Liberation Sans', Arial, sans-serif; text-align: center; color: #0a0a0a; flex: none; }
  .run .lower { margin-top: .5px; font-size: 16.500px; }
  .runleft { width: 670.500px; display: flex; flex-direction: column; }
  .charts { width: 670px; height: 348px; background: #c0c0c0; flex: none; font-family: 'DejaVu Sans', sans-serif; display: block; }
  .ctitle { font-size: 12px; font-weight: 700; text-anchor: middle; fill: #000; }
  .axis { fill: none; stroke: #aaa; stroke-width: .8; }
  .gridline { fill: none; stroke: #e2e2cd; stroke-width: .8; stroke-dasharray: 2 1.500; }
  .ylabel { font-size: 8.200px; text-anchor: end; fill: #444; stroke: #444; stroke-width: .15; font-family: 'DejaVu Sans', sans-serif; font-stretch: semi-condensed; }
  .xlabel { font-size: 7.800px; text-anchor: end; fill: #444; stroke: #444; stroke-width: .15; font-family: 'DejaVu Sans', sans-serif; font-stretch: semi-condensed; }
  .clabel { font-size: 8.800px; font-weight: 700; text-anchor: middle; fill: #444; }
  .legend { font-size: 7.500px; fill: #222; }
  .specs { flex: 1; border: 1px solid #a8a8a8; background: #fff; font-size: 7.800px; color: #111; }
  .spechead, .specrow { display: grid; grid-template-columns: repeat(4, 166.800px); line-height: 10.500px; }
  .spechead { background: #f4f4f4; height: 10.500px; font-size: 7.300px; }
  .spechead span { padding-left: 2.500px; } .specrow span { padding: 1px 0 0 1px; letter-spacing: .1px; }
  .specrow span:last-child { letter-spacing: .3px; }
  .runright { flex: 1; display: flex; flex-direction: column; }
  .log { height: 453px; background: #fff; border: 1.500px solid #b4b4b4; padding: 2px 1px; font-size: 9.100px; letter-spacing: .1px; font-weight: 700; line-height: 10.700px; color: #111; }
  .media { display: flex; gap: 2px; padding: 1px 1px 0; }
  .media button { flex: 1; height: 14.500px; border-radius: 8px; justify-content: center; font-size: 8.500px; font-weight: 400; color: #ccc; background: linear-gradient(#383838, #767676 25%, #444); letter-spacing: .2px; }
  .media .black { background: linear-gradient(#222, #555 20%, #0c0c0c 70%, #333); }
  .speed { display: flex; align-items: center; gap: 4px; margin-top: 1px; height: 15px; font-size: 7.500px; white-space: nowrap; }
  .track { flex: 1; height: 4px; border-radius: 2px; background: #555; display: flex; align-items: center; padding-left: 34px; }
  .track i { width: 11px; height: 11px; border-radius: 50%; background: linear-gradient(#777, #222); }

  .caption { position: absolute; inset: 0; width: 100%; height: 100%; pointer-events: none; }
  .caption text { font: 700 34.500px Lato, 'Open Sans', sans-serif; font-variant-ligatures: none; font-feature-settings: 'liga' 0; fill: #ee3424; stroke: #ee3424; stroke-width: 1.100; }
</style>
